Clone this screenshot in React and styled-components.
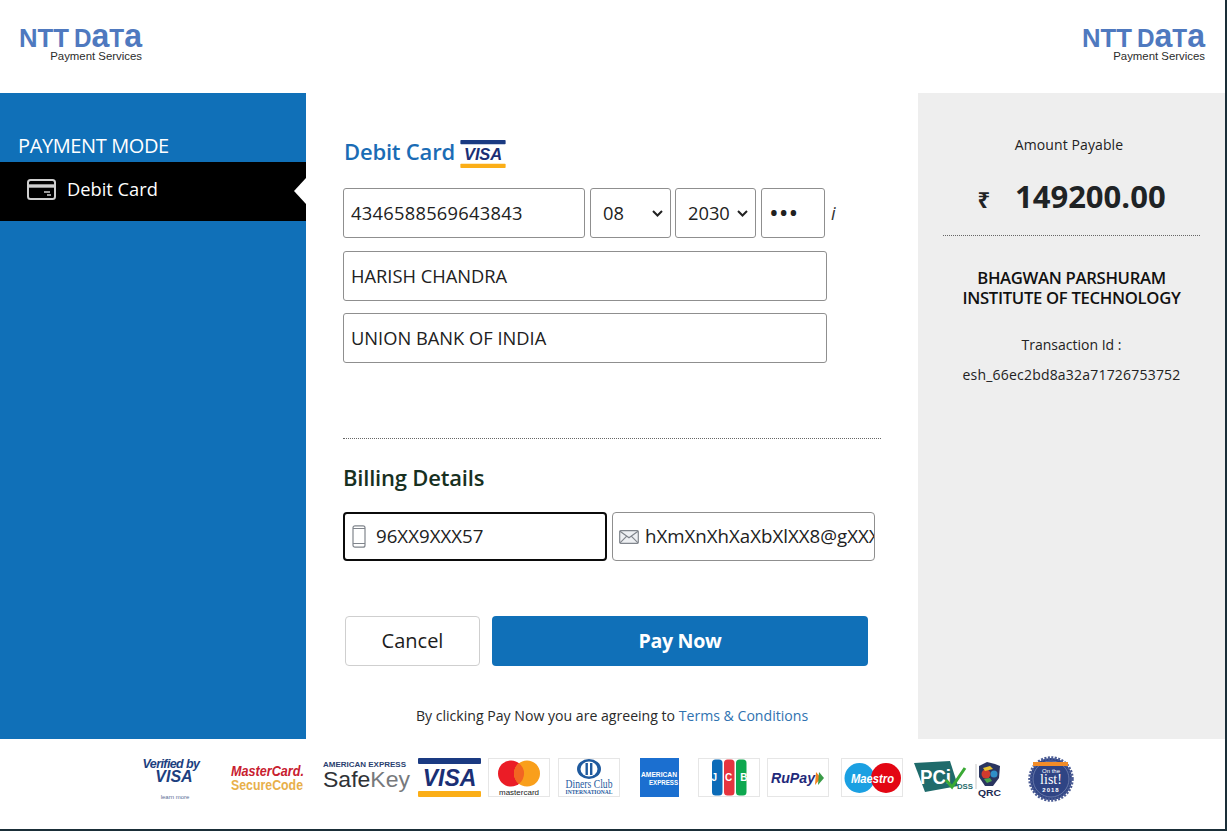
import React from "react";
import styled, { createGlobalStyle } from "styled-components";

const GlobalStyle = createGlobalStyle`
    html, body {
        margin: 0;
        padding: 0;
        background: #fff;
        font-family: "Open Sans", "Noto Sans", sans-serif;
    }
`;

const Page = styled.div`
    box-sizing: border-box;
    width: 1227px;
    height: 831px;
    display: flex;
    flex-direction: column;
    border-right: 2px solid #1a2e38;
    border-bottom: 2px solid #1a2e38;
    overflow: hidden;
`;

const Header = styled.header`
    height: 93px;
    flex: none;
    display: flex;
    justify-content: space-between;
    padding: 29px 20px 0 19px;
    box-sizing: border-box;
`;

const Logo = styled.div`
    width: 123px;
    display: flex;
    flex-direction: column;
    align-items: flex-end;
`;

const LogoSub = styled.span`
    font-family: "Liberation Sans", sans-serif;
    font-size: 11.4px;
    line-height: 13px;
    color: #2b2b2b;
    margin-top: 3px;
`;

const Main = styled.main`
    height: 646px;
    flex: none;
    display: flex;
`;

const Sidebar = styled.aside`
    width: 306px;
    flex: none;
    background: #1070b8;
    padding-top: 39px;
    box-sizing: border-box;
`;

const SideTitle = styled.div`
    color: #fff;
    font-size: 20px;
    line-height: 28px;
    letter-spacing: -0.38px;
    padding-left: 18px;
    margin-bottom: 2px;
`;

const SideItem = styled.div`
    position: relative;
    box-sizing: border-box;
    height: 59px;
    background: #000;
    color: #fff;
    display: flex;
    align-items: center;
    gap: 11px;
    padding: 0 0 5px 27px;
    font-size: 18.3px;
    line-height: 22px;
    span {
        margin-top: -1px;
    }
    &::after {
        content: "";
        position: absolute;
        right: 0;
        top: 16px;
        border-style: solid;
        border-width: 13px 12px 13px 0;
        border-color: transparent #fff transparent transparent;
    }
`;

const Form = styled.section`
    width: 612px;
    flex: none;
    padding: 47px 0 0 37px;
    box-sizing: border-box;
`;

const CardTitle = styled.div`
    display: flex;
    align-items: flex-start;
    height: 28px;
    gap: 5px;
    padding-left: 1px;
    color: #1a6cb5;
    font-size: 22px;
    line-height: 22px;
    font-weight: 600;
    letter-spacing: -0.2px;
`;

const Row = styled.div`
    display: flex;
    align-items: center;
    gap: 5px;
    margin-top: ${(p) => p.$top}px;
`;

const Field = styled.input`
    box-sizing: border-box;
    width: ${(p) => p.$w}px;
    height: 50px;
    border: 1px solid #8f8f8f;
    border-radius: 3px;
    padding: 0 7px 2px;
    font-family: inherit;
    font-size: ${(p) => p.$size || 18.3}px;
    letter-spacing: ${(p) => p.$spacing || 0}px;
    color: #212121;
    background: #fff;
    outline: none;
`;

const Select = styled.select`
    box-sizing: border-box;
    width: 81px;
    height: 50px;
    margin-left: ${(p) => p.$left || 0}px;
    border: 1px solid #8f8f8f;
    border-radius: 3px;
    padding: 0 0 2px 12px;
    font-family: inherit;
    font-size: 18.3px;
    color: #212121;
    outline: none;
    appearance: none;
    background: #fff url("data:image/svg+xml,%3Csvg xmlns='http://www.w3.org/2000/svg' width='11' height='7'%3E%3Cpath d='M1 1l4.5 4.5L10 1' fill='none' stroke='%23222' stroke-width='2'/%3E%3C/svg%3E") no-repeat right 7px center;
`;

const Info = styled.i`
    font-size: 18px;
    color: #333;
    margin-left: 1px;
`;

const Divider = styled.div`
    border-top: 1px dotted #666;
    margin-top: ${(p) => p.$top}px;
    width: ${(p) => p.$w};
`;

const Billing = styled.h3`
    margin: 23px 0 0;
    font-size: 22px;
    line-height: 30px;
    font-weight: 600;
    letter-spacing: -0.2px;
    color: #17301f;
`;

const IconField = styled.label`
    box-sizing: border-box;
    width: ${(p) => p.$w}px;
    height: 49px;
    display: flex;
    align-items: center;
    gap: ${(p) => p.$gap}px;
    padding-left: ${(p) => (p.$focused ? 7 : 6)}px;
    border: ${(p) => (p.$focused ? "2px solid #0b0b0b" : "1px solid #8f8f8f")};
    border-radius: 4px;
    overflow: hidden;
    background: #fff;
`;

const BareInput = styled.input`
    flex: 1;
    min-width: 0;
    border: none;
    outline: none;
    padding: 0 0 2px;
    font-family: inherit;
    font-size: 18.7px;
    color: #212121;
    background: transparent;
`;

const Actions = styled.div`
    display: flex;
    gap: 12px;
    margin: 55px 0 0 2px;
`;

const CancelButton = styled.button`
    box-sizing: border-box;
    width: 135px;
    height: 50px;
    padding: 0 0 2px;
    background: #fff;
    border: 1px solid #cfcfcf;
    border-radius: 4px;
    font-family: inherit;
    font-size: 20px;
    color: #1c1c1c;
`;

const PayButton = styled.button`
    box-sizing: border-box;
    width: 376px;
    height: 50px;
    padding: 0 0 2px;
    background: #1070b8;
    border: none;
    border-radius: 4px;
    font-family: inherit;
    font-size: 19.6px;
    font-weight: 700;
    letter-spacing: -0.3px;
    color: #fff;
`;

const Terms = styled.p`
    margin: 40px 0 0;
    width: 538px;
    text-align: center;
    font-size: 14.1px;
    line-height: 20px;
    color: #2a2a2a;
    a {
        color: #2f72b0;
        text-decoration: none;
    }
`;

const Summary = styled.aside`
    flex: 1;
    background: #eeeeee;
    padding: 0 25px;
    text-align: center;
    color: #222;
`;

const SmallLine = styled.div`
    font-size: 14px;
    line-height: 20px;
    margin-top: ${(p) => p.$top}px;
    padding-right: ${(p) => p.$shift || 0}px;
    letter-spacing: ${(p) => p.$spacing || 0}px;
`;

const Amount = styled.div`
    margin-top: 21px;
    height: 40px;
    display: flex;
    justify-content: center;
    align-items: center;
    gap: 25px;
    font-weight: 700;
    font-size: 31px;
    color: #1f2325;
    span:first-child {
        font-size: 22px;
        margin-top: 5px;
    }
`;

const OrgName = styled.div`
    margin-top: 32px;
    font-size: 16.7px;
    line-height: 20px;
    font-weight: 600;
    letter-spacing: -0.32px;
    color: #111;
`;

const Footer = styled.footer`
    flex: 1;
    display: flex;
    align-items: flex-start;
    padding: 17px 0 0 140px;
    box-sizing: border-box;
`;

const Badge = styled.svg`
    flex: none;
    margin-left: ${(p) => p.$gap || 0}px;
    margin-top: ${(p) => p.$drop || 0}px;
    display: block;
    overflow: visible;
`;

const sans = "Liberation Sans, sans-serif";
const serif = "Liberation Serif, serif";

const NttLogo = () => (
    <Badge width="123" height="18" viewBox="0 0 123 18">
        <text x="0" y="18" fontFamily={sans} fontWeight="700" fontSize="25" fill="#4f79bf" textLength="50" lengthAdjust="spacingAndGlyphs">
            NTT
        </text>
        <text x="55" y="18" fontFamily={sans} fontWeight="700" fontSize="25" fill="#4f79bf" textLength="68" lengthAdjust="spacingAndGlyphs">
            D<tspan fontSize="33">a</tspan>T<tspan fontSize="33">a</tspan>
        </text>
    </Badge>
);

const CardIcon = () => (
    <svg width="29" height="21" viewBox="0 0 29 21" fill="none" stroke="#cfcfcf" strokeWidth="2">
        <rect x="1" y="1" width="27" height="19" rx="2.5" />
        <path d="M1 7h27" strokeWidth="3.4" />
        <path d="M17 13h6M20 16h4" strokeWidth="1.4" />
    </svg>
);

const PhoneIcon = () => (
    <svg width="14" height="23" viewBox="0 0 14 23" fill="none" stroke="#80858c" strokeWidth="1.2">
        <rect x="1" y="0.8" width="12" height="21.4" rx="2" />
        <path d="M1 3.5h12M1 18.5h12" />
    </svg>
);

const MailIcon = () => (
    <svg width="20" height="14" viewBox="0 0 20 14" fill="#eef0f3" stroke="#80858c" strokeWidth="1.2">
        <rect x="0.7" y="0.7" width="18.6" height="12.6" rx="1" />
        <path d="M1 1.2l9 6.6 9-6.6M1 12.8l6.5-6.5M19 12.8l-6.5-6.5" fill="none" />
    </svg>
);

const VisaMark = ({ width, height, gap, drop }) => (
    <Badge $gap={gap} $drop={drop} width={width} height={height} viewBox="0 0 63 39">
        <rect width="63" height="6" rx="1" fill="#1a3a82" />
        <rect y="33" width="63" height="6" rx="1" fill="#fbae17" />
        <text x="31.5" y="28" textAnchor="middle" fontFamily={sans} fontStyle="italic" fontWeight="700" fontSize="23" fill="#1a2f75">
            VISA
        </text>
    </Badge>
);

const Card = ({ gap, children }) => (
    <Badge $gap={gap} $drop={2} width="62" height="39" viewBox="0 0 62 39">
        <rect x="0.5" y="0.5" width="61" height="38" fill="#fff" stroke="#e6e6e6" />
        {children}
    </Badge>
);

const FooterLogos = () => (
    <Footer>
        <Badge width="62" height="47" viewBox="0 0 62 47">
            <text x="31" y="12" textAnchor="middle" fontFamily={sans} fontStyle="italic" fontWeight="700" fontSize="12.5" fill="#1d3f7f" letterSpacing="-0.6">
                Verified by
            </text>
            <text x="34" y="26" textAnchor="middle" fontFamily={sans} fontStyle="italic" fontWeight="700" fontSize="16" fill="#1d3f7f">
                VISA
            </text>
            <text x="35" y="43" textAnchor="middle" fontFamily={sans} fontSize="6" fill="#5a6f96">
                learn more
            </text>
        </Badge>
        <Badge $gap={29} $drop={5} width="73" height="32" viewBox="0 0 73 32">
            <text x="0" y="15" fontFamily={sans} fontStyle="italic" fontWeight="700" fontSize="14" fill="#c8202f" textLength="73" lengthAdjust="spacingAndGlyphs">
                MasterCard.
            </text>
            <text x="0" y="29" fontFamily={sans} fontWeight="700" fontSize="14" fill="#e8b04a" textLength="72" lengthAdjust="spacingAndGlyphs">
                SecureCode
            </text>
        </Badge>
        <Badge $gap={19} $drop={5} width="87" height="36" viewBox="0 0 87 36">
            <text x="0" y="6" fontFamily={sans} fontWeight="700" fontSize="6.5" fill="#2a3f6f" textLength="83" lengthAdjust="spacingAndGlyphs">
                AMERICAN EXPRESS
            </text>
            <text x="0" y="26" fontFamily={sans} fontSize="22" fill="#2f3236" textLength="87" lengthAdjust="spacingAndGlyphs">
                Safe<tspan fill="#77797c">Key</tspan>
            </text>
        </Badge>
        <VisaMark width="63" height="39" gap={8} drop={2} />
        <Card gap={7}>
            <circle cx="23" cy="15.5" r="13" fill="#eb1c26" />
            <circle cx="39" cy="15.5" r="13" fill="#f99f1b" />
            <path d="M31 5.2a13 13 0 0 1 0 20.6a13 13 0 0 1 0-20.6z" fill="#f26522" />
            <text x="31" y="36.5" textAnchor="middle" fontFamily={sans} fontSize="7.5" fill="#222" textLength="40" lengthAdjust="spacingAndGlyphs">
                mastercard
            </text>
        </Card>
        <Card gap={8}>
            <ellipse cx="31" cy="11" rx="12" ry="10" fill="#1f5a9e" />
            <ellipse cx="31" cy="11" rx="8.5" ry="7.4" fill="#fff" />
            <rect x="27.5" y="5" width="2.4" height="12" fill="#1f5a9e" />
            <rect x="32" y="5" width="2.4" height="12" fill="#1f5a9e" />
            <text x="31" y="30" textAnchor="middle" fontFamily={serif} fontSize="13" fill="#1f5a9e" textLength="47" lengthAdjust="spacingAndGlyphs">
                Diners Club
            </text>
            <text x="31" y="36" textAnchor="middle" fontFamily={serif} fontWeight="700" fontSize="5.5" fill="#1f5a9e" textLength="47" lengthAdjust="spacingAndGlyphs">
                INTERNATIONAL
            </text>
        </Card>
        <Badge $gap={20} $drop={2} width="39" height="39" viewBox="0 0 39 39">
            <rect width="39" height="39" fill="#1b6fd0" />
            <text x="1" y="18.5" fontFamily={sans} fontWeight="700" fontSize="7.5" fill="#fff" textLength="36" lengthAdjust="spacingAndGlyphs">
                AMERICAN
            </text>
            <text x="9" y="27" fontFamily={sans} fontWeight="700" fontSize="7.5" fill="#fff" textLength="29" lengthAdjust="spacingAndGlyphs">
                EXPRESS
            </text>
        </Badge>
        <Card gap={19}>
            <rect x="14" y="1.5" width="10.5" height="36" rx="3.5" fill="#0b6bb8" />
            <rect x="26" y="1.5" width="10.5" height="36" rx="3.5" fill="#e6343f" />
            <rect x="38" y="1.5" width="10.5" height="36" rx="3.5" fill="#0ea84f" />
            <text x="31.5" y="23" textAnchor="middle" fontFamily={sans} fontWeight="700" fontSize="10" fill="#fff" textLength="36" lengthAdjust="spacing">
                JCB
            </text>
        </Card>
        <Card gap={7}>
            <text x="4" y="25" fontFamily={sans} fontStyle="italic" fontWeight="700" fontSize="15" fill="#1f2a7a" textLength="44" lengthAdjust="spacingAndGlyphs">
                RuPay
            </text>
            <path d="M49 14l5 6-6 7z" fill="#f58220" />
            <path d="M52 14l5 6-6 7z" fill="#3a9b47" />
        </Card>
        <Card gap={12}>
            <circle cx="18.5" cy="20" r="15" fill="#1ba0e2" />
            <circle cx="45" cy="20" r="15" fill="#e30613" />
            <text x="31.5" y="25" textAnchor="middle" fontFamily={sans} fontStyle="italic" fontWeight="700" fontSize="12" fill="#fff" textLength="43" lengthAdjust="spacingAndGlyphs">
                Maestro
            </text>
        </Card>
        <Badge $gap={11} $drop={5} width="88" height="37" viewBox="0 0 88 37">
            <path d="M0 2L36 0L44 25L11 31z" fill="#1f6b6b" />
            <text x="6" y="23" fontFamily={sans} fontWeight="700" fontSize="21" fill="#fff" textLength="31" lengthAdjust="spacingAndGlyphs">
                PCi
            </text>
            <path d="M32 19l6 7 13-19" fill="none" stroke="#3aa935" strokeWidth="3" />
            <text x="43" y="28" fontFamily={sans} fontWeight="700" fontSize="7.5" fill="#1f6b6b" textLength="16" lengthAdjust="spacingAndGlyphs">
                DSS
            </text>
            <path d="M62 3v25" stroke="#c8c8c8" />
            <path d="M65 5l8-4 8 2 5 2-1 12-6 8h-8l-6-9z" fill="#2a3560" />
            <circle cx="72" cy="13" r="4.5" fill="#d23a2e" />
            <circle cx="80" cy="13" r="3.5" fill="#2f8fc8" />
            <path d="M69 7l7-2 3 3-8 2z" fill="#e8c22e" />
            <path d="M70 18l6-1 2 3-5 2z" fill="#4aa64a" />
            <text x="64" y="35" fontFamily={sans} fontWeight="700" fontSize="9" fill="#1c2a52" textLength="23" lengthAdjust="spacingAndGlyphs">
                QRC
            </text>
        </Badge>
        <Badge $gap={25} $drop={-1} width="48" height="48" viewBox="0 0 48 48">
            <circle cx="24" cy="24" r="21" fill="#2f4484" stroke="#4a5b94" strokeWidth="3.5" strokeDasharray="2 1.4" />
            <circle cx="24" cy="24" r="18" fill="none" stroke="#8c98bf" strokeWidth="0.6" />
            <rect x="6" y="7" width="35" height="4" fill="#f28c28" />
            <text x="24" y="18" textAnchor="middle" fontFamily={sans} fontSize="6" fill="#fff">
                On the
            </text>
            <text x="24" y="29" textAnchor="middle" fontFamily={serif} fontSize="14" fill="#fff">
                list!
            </text>
            <text x="24" y="37" textAnchor="middle" fontFamily={sans} fontWeight="700" fontSize="6" letterSpacing="1" fill="#fff">
                2018
            </text>
        </Badge>
    </Footer>
);

const App = () => {
    return (
        <>
            <GlobalStyle />
            <Page>
                <Header>
                    <Logo>
                        <NttLogo />
                        <LogoSub>Payment Services</LogoSub>
                    </Logo>
                    <Logo>
                        <NttLogo />
                        <LogoSub>Payment Services</LogoSub>
                    </Logo>
                </Header>
                <Main>
                    <Sidebar>
                        <SideTitle>PAYMENT MODE</SideTitle>
                        <SideItem>
                            <CardIcon />
                            <span>Debit Card</span>
                        </SideItem>
                    </Sidebar>
                    <Form>
                        <CardTitle>
                            Debit Card
                            <VisaMark width="46" height="28" />
                        </CardTitle>
                        <Row $top={20}>
                            <Field $w={242} $spacing={0.28} readOnly value="4346588569643843" />
                            <Select defaultValue="08">
                                <option>08</option>
                            </Select>
                            <Select $left={-1} defaultValue="2030">
                                <option>2030</option>
                            </Select>
                            <Field $w={64} $size={26} type="password" readOnly value="123" />
                            <Info>i</Info>
                        </Row>
                        <Row $top={13}>
                            <Field $w={484} readOnly value="HARISH CHANDRA" />
                        </Row>
                        <Row $top={12}>
                            <Field $w={484} readOnly value="UNION BANK OF INDIA" />
                        </Row>
                        <Divider $top={75} $w="538px" />
                        <Billing>Billing Details</Billing>
                        <Row $top={20}>
                            <IconField $w={264} $gap={10} $focused>
                                <PhoneIcon />
                                <BareInput readOnly value="96XX9XXX57" />
                            </IconField>
                            <IconField $w={263} $gap={6}>
                                <MailIcon />
                                <BareInput readOnly value="hXmXnXhXaXbXlXX8@gXXXl.com" />
                            </IconField>
                        </Row>
                        <Actions>
                            <CancelButton>Cancel</CancelButton>
                            <PayButton>Pay Now</PayButton>
                        </Actions>
                        <Terms>
                            By clicking Pay Now you are agreeing to <a href="#terms">Terms &amp; Conditions</a>
                        </Terms>
                    </Form>
                    <Summary>
                        <SmallLine $top={42} $shift={5} $spacing={0.1}>Amount Payable</SmallLine>
                        <Amount>
                            <span>₹</span>
                            <span>149200.00</span>
                        </Amount>
                        <Divider $top={19} $w="100%" />
                        <OrgName>
                            BHAGWAN PARSHURAM
                            <br />
                            INSTITUTE OF TECHNOLOGY
                        </OrgName>
                        <SmallLine $top={27}>Transaction Id :</SmallLine>
                        <SmallLine $top={10} $spacing={0.2}>esh_66ec2bd8a32a71726753752</SmallLine>
                    </Summary>
                </Main>
                <FooterLogos />
            </Page>
        </>
    );
};

export default App;
